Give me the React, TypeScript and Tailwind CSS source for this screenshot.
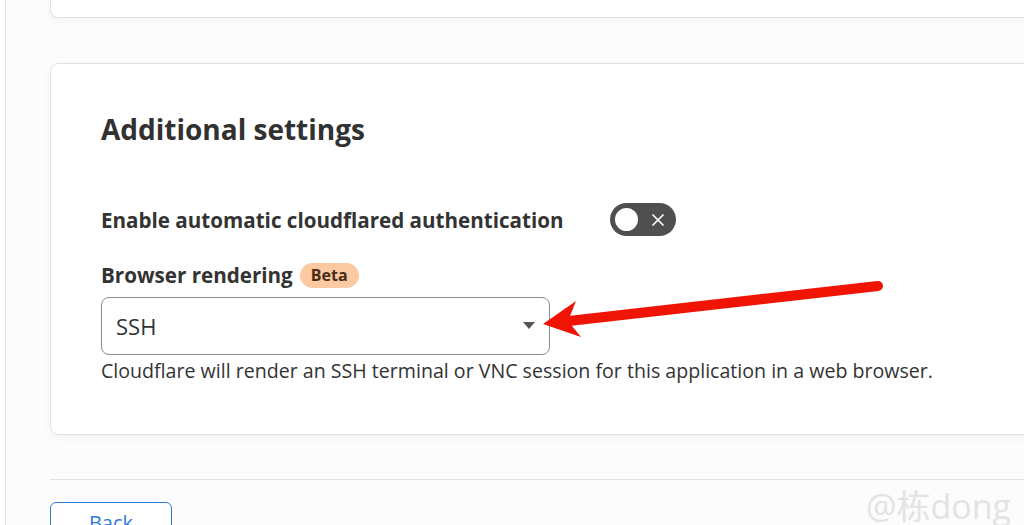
import { X } from "lucide-react";

function Toggle() {
  return (
    <div className="relative flex h-[33px] w-[66px] shrink-0 items-center rounded-full bg-[#4f4f4f] px-[3px]">
      <div className="h-[27px] w-[27px] rounded-full border-2 border-[#4f4f4f] bg-white" />
      <X className="ml-[8px] h-[20px] w-[20px] text-white" strokeWidth={2} />
    </div>
  );
}

function RedArrow() {
  return (
    <svg className="pointer-events-none absolute left-0 top-0" width="1024" height="525">
      <line x1="878" y1="286" x2="560" y2="322" stroke="#f01405" strokeWidth="10" strokeLinecap="round" />
      <polygon points="543,324 576,301 568,321 581,337" fill="#f01405" />
    </svg>
  );
}

export default function App() {
  return (
    <div
      className="relative flex h-[525px] w-[1024px] overflow-hidden bg-[#fcfcfc] text-[#333]"
      style={{ fontFamily: '"Open Sans", "Noto Sans", "Noto Sans CJK SC", sans-serif' }}
    >
      <div className="w-[6px] shrink-0 border-r border-[#e4e4e4] bg-white" />

      <main className="flex flex-1 flex-col pl-[44px]">
        <div className="h-[18px] w-[1000px] shrink-0 rounded-b-lg border border-t-0 border-[#e2e2e2] bg-white shadow-[0_3px_8px_rgba(0,0,0,0.04)]" />

        <section className="mt-[45px] h-[372px] w-[1000px] shrink-0 rounded-lg border border-[#e2e2e2] bg-white px-[50px] pt-[47px] shadow-[0_3px_8px_rgba(0,0,0,0.04)]">
          <h2 className="text-[28px] font-bold leading-[36px] text-[#313131]">Additional settings</h2>

          <div className="mt-[56px] flex items-center">
            <span className="w-[509px] text-[20.6px] font-bold leading-[28px]">
              Enable automatic cloudflared authentication
            </span>
            <Toggle />
          </div>

          <div className="mt-[25px] flex items-center gap-[7px]">
            <span className="text-[20.6px] font-bold leading-[28px]">Browser rendering</span>
            <span className="rounded-full bg-[#fbc9a2] px-[11px] text-[16px] font-bold leading-[25px] text-[#4a2c1a]">
              Beta
            </span>
          </div>

          <div className="mt-[8px] flex h-[58px] w-[449px] items-center justify-between rounded-lg border border-[#8c8c8c] pl-[14px] pr-[14px]">
            <span className="text-[22px]">SSH</span>
            <svg width="12" height="8" viewBox="0 0 12 8">
              <polygon points="0,0 12,0 6,7" fill="#555" />
            </svg>
          </div>

          <p className="mt-[3px] text-[19.6px] leading-[26px]">
            Cloudflare will render an SSH terminal or VNC session for this application in a web browser.
          </p>
        </section>

        <div className="mt-[44px] h-px w-[1000px] shrink-0 bg-[#e2e2e2]" />

        <div className="mt-[22px] shrink-0">
          <button className="h-[40px] w-[122px] rounded-md border border-[#2c7cd6] bg-white pb-[10px] pt-[10px] text-[20px] leading-[20px] text-[#2c7cd6]">
            Back
          </button>
        </div>
      </main>

      <RedArrow />

      <div className="pointer-events-none absolute left-[866px] top-[484px] text-[34px] leading-[44px] text-[#e3e3e3]">
        @栋dong
      </div>
    </div>
  );
}
